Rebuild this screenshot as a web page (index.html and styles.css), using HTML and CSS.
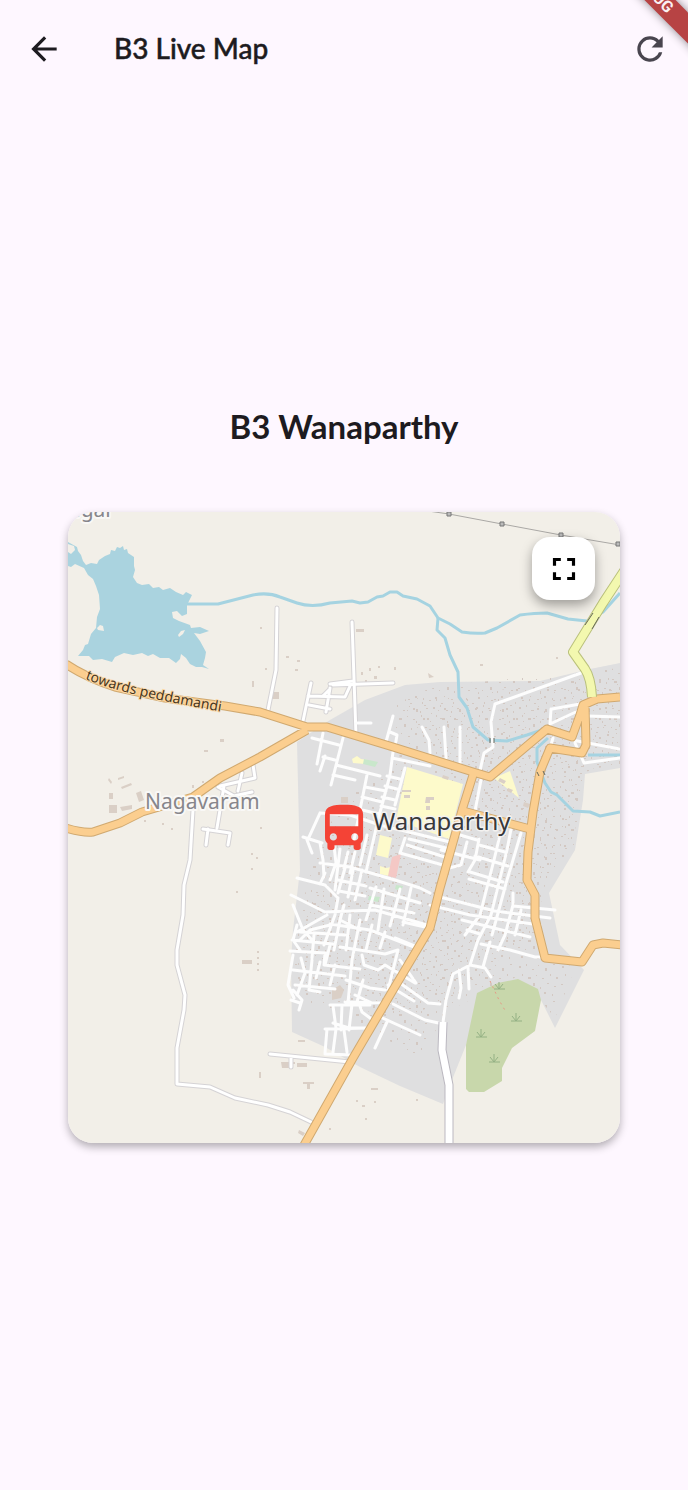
FILE: index.html
```html
<!DOCTYPE html>
<html lang="en">
<head>
<meta charset="utf-8">
<meta name="viewport" content="width=device-width, initial-scale=1">
<title>B3 Live Map</title>
<link rel="stylesheet" href="styles.css">
</head>
<body>
<header class="app-bar">
  <button class="icon-button" type="button" aria-label="Back">
    <svg class="icon" viewBox="0 0 24 24" aria-hidden="true"><path d="M20 11H7.83l5.59-5.59L12 4l-8 8 8 8 1.41-1.41L7.83 13H20z"/></svg>
  </button>
  <h1 class="app-title">B3 Live Map</h1>
  <button class="icon-button icon-button-muted" type="button" aria-label="Refresh">
    <svg class="icon" viewBox="0 0 24 24" aria-hidden="true"><path d="M17.65 6.35A7.96 7.96 0 0 0 12 4a8 8 0 1 0 7.73 10h-2.08A6 6 0 1 1 12 6c1.66 0 3.14.69 4.22 1.78L13 11h7V4z"/></svg>
  </button>
  <div class="corner"><span class="ribbon">DEBUG</span></div>
</header>

<main class="content">
  <h2 class="route-title">B3 Wanaparthy</h2>
  <section class="map-card" aria-label="Live map">
    <svg class="map" viewBox="68 512 552 631" role="img" aria-label="Map of Wanaparthy">
      <defs>
        <pattern id="specks" width="43" height="37" patternUnits="userSpaceOnUse">
          <path class="speck" d="M3 4h2v2h-2zM10 2h1v2h-1zM16 7h2v1h-2zM22 3h1v1h-1zM29 6h2v3h-2zM37 2h2v1h-2zM6 12h1v2h-1zM12 15h3v2h-3zM20 13h1v1h-1zM26 16h2v1h-2zM34 12h1v2h-1zM40 15h2v2h-2zM2 22h2v1h-2zM9 24h1v1h-1zM17 21h2v3h-2zM24 25h1v2h-1zM31 21h2v1h-2zM38 24h2v1h-2zM5 31h2v2h-2zM14 30h1v1h-1zM21 33h2v1h-2zM28 30h2v2h-2zM36 32h1v2h-1z"/>
        </pattern>
        <pattern id="fine-specks" width="31" height="29" patternUnits="userSpaceOnUse">
          <path class="speck" d="M2 3h1v2h-1zM7 7h2v1h-2zM14 2h1v1h-1zM19 6h1v2h-1zM26 4h2v1h-2zM4 14h1v1h-1zM10 12h2v2h-2zM17 15h1v2h-1zM23 12h2v1h-2zM28 17h1v1h-1zM6 22h2v1h-2zM13 25h1v2h-1zM20 22h2v2h-2zM27 25h1v1h-1z"/>
        </pattern>
        <path id="highway-label" d="M85 679C120 693 165 702 235 714"/>
      </defs>

      <rect class="land" x="68" y="512" width="552" height="631"/>

      <path class="residential" d="M297 742L330 720L365 700L405 685L440 682L540 681L590 669L620 663V768L585 774L583 800L575 850L549 893L560 945L584 970L555 1028L541 1000L500 1000L468 1040L450 1085L443 1104L400 1086L360 1067L325 1047L292 1032L291 960L293 930L300 870Z"/>
      <path class="built" d="M392 700L440 686L620 668V766L583 772L575 845L530 895L545 955L575 968L555 1018L520 975L450 1010L415 1060L375 1030L335 1010L295 1000V930L320 840L345 800L400 760Z" fill="url(#specks)"/>
      <path class="built" d="M400 700L500 690L620 676V765L582 770L574 840L545 885L535 930L450 1000L395 1020L300 990L296 935L340 840L450 780Z" fill="url(#fine-specks)"/>

      <path class="park" d="M518 979L538 989L541 1000L535 1031L512 1048L502 1068V1081L484 1092H469L466 1089V1045L477 993L498 983Z"/>
      <g class="tree">
        <path d="M494 989h11M499 989v-7M499 989l-4-5M499 989l4-5"/>
        <path d="M511 1021h11M516 1021v-8M516 1021l-4-5M516 1021l4-5"/>
        <path d="M476 1037h11M481 1037v-8M481 1037l-4-5M481 1037l4-5"/>
        <path d="M489 1062h11M494 1062v-8M494 1062l-4-5M494 1062l4-5"/>
      </g>
      <path class="footpath" d="M490 981L499 1000L506 1012"/>

      <path class="school" d="M407 767L463 784L449 839L396 820Z"/>
      <path class="school" d="M494 778L510 771L519 798Z"/>
      <path class="school" d="M380 835L392 838L388 858L376 855Z"/>
      <path class="school" d="M352 759l5-3 4 3 7 1-3 4-12-1z"/>
      <path class="school" d="M380 866l6 2 5-1-2 9-9-2z"/>
      <path class="clinic" d="M392 857L401 854L396 878L388 876Z"/>
      <path class="garden" d="M364 759l14 3-3 5-12-3zM369 896l11 1-2 5-10-2zM396 885l7 1-2 5-6-2z"/>
      <path class="building" d="M402 790h9v2h-9zM404 795h6v3h-6zM426 797h8v3h-4v3h-5zM426 806h4v4h-4zM500 778l6 3-2 3-6-3zM508 788l5 2-2 3-4-2zM524 802l6 2-2 4-5-2zM332 990l8-5 4 5-3 8-9 2zM341 797h7v6h-7zM443 775l6 2-1 3-6-2z"/>
      <path class="building" d="M109 793h4v6h-4zM109 805h8v8h-8zM120 807l12-2v4l-10 2zM136 793l5-2 3 9-5 2zM121 787l10-4 1 2-10 4zM118 778l6-2v2l-6 2zM109 778l3 4-1 2-3-4zM220 739h4v3h-4zM204 750h4v2h-4zM242 960h10v4h-10zM257 951h2v2h-2zM257 957h2v2h-2zM257 963h2v2h-2zM257 969h2v2h-2zM272 692h7v7h-7zM356 629h8v3h-8zM286 656h3v2h-3zM297 660h3v2h-3zM295 669h3v2h-3zM275 633h2v2h-2zM265 668h2v2h-2zM252 681h2v6h-2zM260 627h2v2h-2zM361 672h2v3h-2zM369 668h2v3h-2zM378 666h2v2h-2zM394 667h2v3h-2zM374 676h3v3h-3zM365 680h2v2h-2zM428 673l6 4-5 1zM281 1062h14v2h-5v4h-8zM297 1063h10v4h-10zM303 1082h11v2h-4v5h-3v-5h-4zM298 1040h7v2h-7zM259 1072h2v6h-2zM192 785h2v3h-2zM202 781h2v2h-2zM144 820h2v2h-2zM162 823h2v2h-2zM171 828h2v2h-2zM236 891h2v2h-2zM251 853h2v2h-2zM256 857h2v2h-2zM251 868h2v2h-2zM260 827h2v2h-2zM356 1100h2v2h-2zM362 1105h3v2h-3zM371 1088h7v2h-7zM374 1101h2v2h-2zM365 1118h2v2h-2zM329 1128h2v2h-2zM416 1099h2v2h-2zM480 664h3v2h-3zM556 657h2v2h-2zM299 1130l6 3-2 3-5-3z"/>

      <path class="water" d="M68 542L77 547L78 551L81 555L83 561L86 565L91 563L97 564L99 560L105 556L110 554L111 550L115 551L117 547L120 548L123 546L124 550L127 549L128 553L134 557V566L135 570L133 577L137 583L142 585L149 584L153 588L159 587L163 590L170 588L176 592L183 595L186 592L192 595L187 605V614L182 616L177 611L172 612L173 618L179 621L190 625L191 628L200 627L209 631L200 634L194 633L200 641L206 652L205 658L203 665L209 669L202 667L196 667L190 664L186 658L181 654L180 659L176 663L169 658L160 658L153 654L148 656L142 653L133 655L124 653L115 657L112 662L102 659L93 660L89 656L78 656L83 650L85 645L88 644L91 634L96 628L97 617L100 609L99 595L96 586L93 579L88 575L84 568L75 564L71 567L68 566Z"/>
      <path class="island" d="M68 544l6 2 1 4-4 4-3-2zM97 628l3-3 3 1 1 5-6-1zM178 635l3-4 4-1-2 4-4 3z"/>
      <path class="stream" d="M187 604H218L253 595Q268 592 280 597L297 603Q312 608 330 603L352 601L360 603L368 602L377 597L383 596L390 592L397 592L403 596L417 599L430 606L438 618L450 624L462 632Q475 634 485 633L497 628L520 615Q535 613 547 613L568 619L587 621L603 612L620 593"/>
      <path class="stream" d="M438 618L437 630L445 638L450 655L458 672L459 697L467 708L473 727L488 740L507 741L527 735L548 728M548 738L537 748V762L545 783L551 792L557 795L573 811L590 812L600 816L620 812M588 755H620"/>

      <path class="power" d="M428 511L449 514L502 524L561 535L620 545"/>
      <path class="pylon" d="M447 512h4v4h-4zM500 522h4v4h-4zM559 533h4v4h-4zM616 542h4v4h-4z"/>

      <path class="lane-edge" d="M277 608L276 670L268 710M352 622L356 735M330 684L353 681M333 685L393 683M311 683L303 721M308 696L345 697L350 686M309 705L330 709M330 688L326 712M323 696L329 690M193 810L190 860L184 885L183 915L177 950V965L185 995L184 1010L177 1048V1084L210 1087L235 1098L268 1105L290 1112L311 1122M270 1054L300 1057L350 1062M291 1058V1067M253 765L255 778L220 786M242 773L238 791M224 786L217 828M203 829L230 833L228 845M208 829L206 845M218 787L234 796L252 792"/>
      <path class="lane" d="M277 608L276 670L268 710M352 622L356 735M330 684L353 681M333 685L393 683M311 683L303 721M308 696L345 697L350 686M309 705L330 709M330 688L326 712M323 696L329 690M193 810L190 860L184 885L183 915L177 950V965L185 995L184 1010L177 1048V1084L210 1087L235 1098L268 1105L290 1112L311 1122M270 1054L300 1057L350 1062M291 1058V1067M253 765L255 778L220 786M242 773L238 791M224 786L217 828M203 829L230 833L228 845M208 829L206 845M218 787L234 796L252 792"/>

      <path class="street" d="M356 723L371 723M393 716L386 742M390 732L397 735L395 747M422 727L429 740L430 753M444 727L446 758M460 727L460 763M495 704L581 673M495 704L491 722L493 747L484 753L479 775M481 780L475 811M552 709L580 704M551 709L550 724L580 710M587 716L620 717M572 740L620 749M553 738L551 745M575 743L584 763L620 758
        M323 733L317 764M312 738L339 745M325 756L320 771M343 738L331 785M323 757L335 760M336 765L380 776M333 775L355 780M367 775L362 800L354 840M393 752L390 775L378 820L366 872M392 758L430 766M405 768L395 805M365 787L386 791M362 797L382 802M358 809L379 814M387 776L400 779M385 786L397 789M382 797L395 800M381 806L395 809
        M320 813L309 837M320 813L350 815L380 825L450 842M303 837L322 843M307 840L312 853M320 843L323 860L324 877M334 846L336 863L330 880M340 849L335 890M348 852L344 868M355 852L350 873M367 835L360 865M320 863L350 867L395 880L420 888L430 893
        M297 878L325 885L338 898M325 873L320 884M345 868L338 893M353 870L348 897M362 870L355 900M338 880L366 886M339 891L365 896M291 895L325 912L375 910L427 925M338 898L335 915L324 945M327 915L297 932M376 887L366 920M384 889L378 930M400 889L396 905L390 926M411 888L403 925M370 888L420 903M370 905L414 913M403 922L425 927
        M405 838L400 853L450 867M409 839L450 849M407 845L448 858M467 842L461 865L449 868M460 835L477 840M441 850L480 860M479 839L475 860L468 872M511 829L507 850L491 915L478 940M521 833L507 880L492 935M500 835L494 860L480 915L465 935M479 845L505 852M475 856L508 866M470 872L503 882M469 879L505 889M513 893V905L505 935L498 950M521 910L515 935M440 897L495 911L550 918M430 905L470 915L540 925M513 906L555 910M462 920L530 937M467 930L480 934M481 944L510 950L535 957H546M478 940L470 965L453 974L446 1000L442 1030M470 965L485 968L491 977M468 967L469 989M459 970L461 988L459 998M490 942L483 967
        M297 925L293 940L300 950M292 940L333 944M290 951L326 953M293 955L288 985L294 998M301 958L305 973L297 995M312 960L309 990L320 992M320 962L316 978M325 953L324 965L360 969M330 945L325 965M340 920L334 950M350 915L346 950M360 920L352 960L348 1003M372 925L366 950M293 970L345 976M295 985L335 989M335 965L330 985M314 935L312 958M300 932L345 935M330 924L370 930L414 947M385 932L380 948M340 947L385 954L398 950L395 962L388 990M362 955L364 965L378 970L385 965L415 983M346 980L370 988L385 990M355 995L372 1003M363 980L357 1002M345 1002L390 1003M330 1005H370M333 1006L336 1028M342 1005L341 1030M352 1004L349 1030M360 1006L362 1012L370 1018L375 1023M333 1023L349 1028L370 1028M327 1029L325 1053M336 1029L333 1052M344 1030L347 1052M325 1054L353 1055M325 1029L370 1028M293 990L302 1000L299 1010M291 1000L300 1003
        M293 905L303 930L312 940M300 940L310 930L330 925M344 905L340 920L360 930"/>
      <path class="street" d="M400 983L428 1003L440 1004M393 1004L425 1020L443 1024M378 1016L420 1035M387 1022L375 1048M388 985L414 1001M400 960L416 983M417 947L395 938"/>
      <path class="wide-edge" d="M443 1022L442 1050L449 1085V1145"/>
      <path class="wide" d="M443 1022L442 1050L449 1085V1145"/>

      <path class="highway-edge" d="M66 664Q85 677 115 687L165 698L225 706L260 712L307 727H327L393 747L473 772L490 777L547 729L572 737L580 715L583 705L597 699L620 697M66 828Q82 833 93 832L120 823L142 812L193 797L220 778L260 757L307 730M585 705L586 745L582 753L550 748L540 772L533 812L528 852L527 880L535 895V918L545 958L582 962L593 945L603 943L622 945M473 775L463 807L440 888L430 928L393 990L353 1058L303 1147M463 811L530 829"/>
      <path class="highway" d="M66 664Q85 677 115 687L165 698L225 706L260 712L307 727H327L393 747L473 772L490 777L547 729L572 737L580 715L583 705L597 699L620 697M66 828Q82 833 93 832L120 823L142 812L193 797L220 778L260 757L307 730M585 705L586 745L582 753L550 748L540 772L533 812L528 852L527 880L535 895V918L545 958L582 962L593 945L603 943L622 945M473 775L463 807L440 888L430 928L393 990L353 1058L303 1147M463 811L530 829"/>
      <path class="secondary-edge" d="M624 571L603 603L573 652L585 669Q591 678 592 697"/>
      <path class="secondary" d="M624 571L603 603L573 652L585 669Q591 678 592 697"/>
      <path class="bridge" d="M593 613L585 625M599 617L592 629"/>
      <path class="bridge" d="M490 738v5M494 738v5M537 772l2 4M543 771l2 4"/>

      <text class="highway-name"><textPath href="#highway-label">towards peddamandi</textPath></text>
      <text class="town" x="373" y="830">Wanaparthy</text>
      <text class="village" x="145" y="809">Nagavaram</text>
      <text class="village" x="114" y="517" text-anchor="end">.gar</text>

      <path class="bus" transform="translate(315.5 800) scale(2.38)" d="M4 16c0 .88.39 1.67 1 2.22V20c0 .55.45 1 1 1h1c.55 0 1-.45 1-1v-1h8v1c0 .55.45 1 1 1h1c.55 0 1-.45 1-1v-1.78c.61-.55 1-1.34 1-2.22V6c0-3.5-3.58-4-8-4s-8 .5-8 4v10zm3.5 1c-.83 0-1.5-.67-1.5-1.5S6.67 14 7.5 14s1.5.67 1.5 1.5S8.33 17 7.5 17zm9 0c-.83 0-1.5-.67-1.5-1.5s.67-1.5 1.5-1.5 1.5.67 1.5 1.5-.67 1.5-1.5 1.5zm1.5-6H6V6h12v5z"/>
    </svg>
    <button class="fullscreen-button" type="button" aria-label="Full screen">
      <svg class="icon" viewBox="0 0 24 24" aria-hidden="true"><path d="M7 14H5v5h5v-2H7zM5 10h2V7h3V5H5zM17 17h-3v2h5v-5h-2zM14 5v2h3v3h2V5z"/></svg>
    </button>
  </section>
</main>
</body>
</html>
```
FILE: styles.css
```css
* {
  box-sizing: border-box;
}

body {
  display: flex;
  flex-direction: column;
  min-height: 100vh;
  margin: 0;
  background: #fef7ff;
  color: #1d1b20;
  font-family: Lato, "Open Sans", sans-serif;
}

button {
  display: grid;
  place-items: center;
  padding: 0;
  border: 0;
  cursor: pointer;
}

.icon {
  width: 38px;
  height: 38px;
  fill: currentColor;
}

/* App bar */
.app-bar {
  position: relative;
  display: flex;
  align-items: center;
  gap: 46px;
  height: 97px;
  padding: 0 14px 0 20px;
}

.icon-button {
  width: 48px;
  height: 48px;
  border-radius: 24px;
  background: transparent;
  color: #1d1b20;
}

.icon-button-muted {
  color: #49454f;
}

.app-title {
  flex: 1;
  margin: 0;
  padding-bottom: 2px;
  font-size: 28px;
  line-height: 40px;
  font-weight: 500;
  -webkit-text-stroke: 0.5px currentColor;
}

.corner {
  position: absolute;
  top: 0;
  right: 0;
  width: 64px;
  height: 64px;
  overflow: hidden;
  pointer-events: none;
}

.ribbon {
  position: absolute;
  top: 3px;
  right: -46px;
  width: 120px;
  height: 22px;
  padding-right: 65px;
  background: #b74344;
  box-shadow: 0 0 10px rgba(0, 0, 0, 0.45);
  color: #fbeff2;
  font: 700 16px/22px Roboto, sans-serif;
  text-align: right;
  transform: rotate(45deg);
}

/* Content */
.content {
  display: flex;
  flex: 1;
  flex-direction: column;
  justify-content: center;
  gap: 64px;
  padding: 0 68px 40px;
}

.route-title {
  margin: 0;
  font-size: 33px;
  line-height: 44px;
  font-weight: 700;
  text-align: center;
}

.map-card {
  position: relative;
  overflow: hidden;
  border-radius: 25px;
  box-shadow: 0 4px 8px rgba(0, 0, 0, 0.3);
}

.map {
  display: block;
  width: 100%;
  height: auto;
}

.fullscreen-button {
  position: absolute;
  top: 25px;
  right: 25px;
  width: 63px;
  height: 63px;
  border-radius: 18px;
  background: #fff;
  box-shadow: 0 5px 12px rgba(0, 0, 0, 0.35);
  color: #000;
}

/* Map areas */
.land,
.island {
  fill: #f2efe8;
}

.residential {
  fill: #dfdfe0;
}

.speck {
  fill: #d3c8c2;
}

.park {
  fill: #c8d7ab;
}

.tree {
  fill: none;
  stroke: #94b184;
}

.footpath {
  fill: none;
  stroke: #e59b86;
  stroke-dasharray: 2 4;
}

.school {
  fill: #fdfacb;
}

.clinic {
  fill: #f4c8c5;
}

.garden {
  fill: #c9e7cb;
}

.building {
  fill: #dacfc6;
}

.water {
  fill: #aad3df;
}

/* Map lines */
.stream,
.power,
.lane-edge,
.lane,
.street,
.wide-edge,
.wide,
.highway-edge,
.highway,
.secondary-edge,
.secondary,
.bridge {
  fill: none;
  stroke-linejoin: round;
}

.lane-edge,
.lane,
.street {
  stroke-linecap: round;
}

.stream {
  stroke: #a5d3e1;
  stroke-width: 3px;
}

.power {
  stroke: #aaa8a5;
}

.pylon {
  fill: #bbb;
  stroke: #777;
}

.lane-edge {
  stroke: #d5d3d5;
  stroke-width: 5px;
}

.lane {
  stroke: #fff;
  stroke-width: 3px;
}

.street {
  stroke: #fdfdfd;
  stroke-width: 3px;
}

.wide-edge {
  stroke: #bbb8c0;
  stroke-width: 9px;
}

.wide {
  stroke: #fff;
  stroke-width: 7px;
}

.highway-edge {
  stroke: #d0a970;
  stroke-width: 9px;
}

.highway {
  stroke: #fbce8f;
  stroke-width: 7px;
}

.secondary-edge {
  stroke: #bac17c;
  stroke-width: 10px;
}

.secondary {
  stroke: #f3f8af;
  stroke-width: 8px;
}

.bridge {
  stroke: #66685c;
}

/* Map labels */
.highway-name,
.town,
.village {
  font-family: "Noto Sans", sans-serif;
  paint-order: stroke;
  stroke-linejoin: round;
}

.highway-name {
  fill: #4a3720;
  stroke: #fbd9a8;
  stroke-width: 2px;
  font-size: 14px;
}

.town {
  fill: #38383a;
  stroke: #f4f2f0;
  stroke-width: 3px;
  font-size: 24px;
}

.village {
  fill: #87868b;
  stroke: #f9f8f6;
  stroke-width: 4px;
  font-size: 21px;
}

.bus {
  fill: #f44336;
}
```
